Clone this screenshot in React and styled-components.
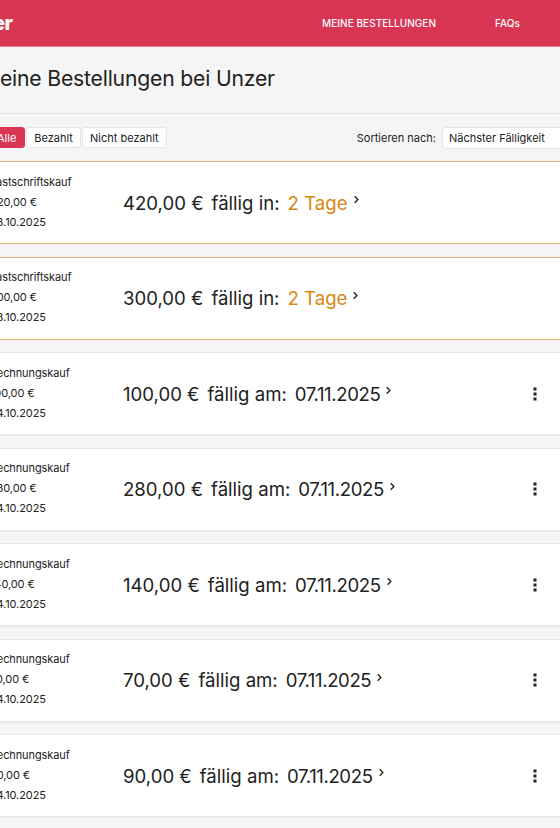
import React from "react";
import styled, { createGlobalStyle } from "styled-components";

const GlobalStyle = createGlobalStyle`
  html, body {
    margin: 0;
    padding: 0;
    background: #f5f5f5;
    overflow: hidden;
  }
  body {
    font-family: "Inter", "Noto Sans", sans-serif;
    color: #222;
  }
  * { box-sizing: border-box; }
`;

const orders = [
  { method: "Lastschriftskauf", total: "420,00 €", date: "28.10.2025", amount: "420,00 €", label: "fällig in:", due: "2 Tage", soon: true },
  { method: "Lastschriftskauf", total: "300,00 €", date: "28.10.2025", amount: "300,00 €", label: "fällig in:", due: "2 Tage", soon: true },
  { method: "Rechnungskauf", total: "100,00 €", date: "24.10.2025", amount: "100,00 €", label: "fällig am:", due: "07.11.2025" },
  { method: "Rechnungskauf", total: "280,00 €", date: "24.10.2025", amount: "280,00 €", label: "fällig am:", due: "07.11.2025" },
  { method: "Rechnungskauf", total: "140,00 €", date: "24.10.2025", amount: "140,00 €", label: "fällig am:", due: "07.11.2025" },
  { method: "Rechnungskauf", total: "70,00 €", date: "24.10.2025", amount: "70,00 €", label: "fällig am:", due: "07.11.2025" },
  { method: "Rechnungskauf", total: "90,00 €", date: "24.10.2025", amount: "90,00 €", label: "fällig am:", due: "07.11.2025" },
];

const Viewport = styled.div`
  width: 560px;
  height: 828px;
  overflow: hidden;
`;

const Page = styled.div`
  width: 600px;
  margin-left: -20px;
`;

const Header = styled.header`
  height: 47px;
  background: #d93654;
  border-bottom: 1px solid #e87b8f;
  display: flex;
  align-items: center;
`;

const Logo = styled.div`
  font-size: 20px;
  font-weight: 800;
  color: #fff;
  letter-spacing: -0.5px;
  margin-left: -24px;
  width: 300px;
`;

const Nav = styled.nav`
  display: flex;
  align-items: center;
  gap: 59px;
  margin-left: 66px;
`;

const NavLink = styled.a`
  color: #fff;
  font-size: 10px;
  font-weight: 500;
  letter-spacing: 0.05px;
  text-decoration: none;
`;

const TitleBar = styled.div`
  height: 67px;
  display: flex;
  align-items: center;
  padding-left: 1px;
  padding-bottom: 4px;
  border-bottom: 1px solid #e4e4e4;
`;

const Title = styled.h1`
  margin: 0;
  font-size: 21.2px;
  font-weight: 400;
  color: #222;
  letter-spacing: -0.2px;
`;

const Toolbar = styled.div`
  display: flex;
  align-items: center;
  justify-content: space-between;
  height: 47px;
  padding: 0 0 0 8px;
`;

const Tabs = styled.div`
  display: flex;
  gap: 1px;
`;

const Tab = styled.button`
  height: 21px;
  padding: 0 ${(p) => (p.active ? "8px" : "7px")};
  border: 1px solid ${(p) => (p.active ? "#d93654" : "#e6e6e6")};
  border-radius: 3px;
  background: ${(p) => (p.active ? "#d93654" : "#fff")};
  color: ${(p) => (p.active ? "#fff" : "#222")};
  font-family: inherit;
  font-size: 11px;
  cursor: pointer;
`;

const Sort = styled.div`
  display: flex;
  align-items: center;
  gap: 6px;
  font-size: 11px;
`;

const Select = styled.div`
  width: 138px;
  height: 22px;
  padding: 0 6px;
  background: #fff;
  border: 1px solid #e4e4e4;
  border-radius: 4px;
  display: flex;
  align-items: center;
  justify-content: space-between;
  font-size: 11px;
`;

const List = styled.div`
  display: flex;
  flex-direction: column;
  gap: 12.5px;
`;

const Card = styled.div`
  height: 83px;
  background: #fff;
  border: 1px solid ${(p) => (p.soon ? "#e8b26c" : "#e6e6e6")};
  box-shadow: ${(p) => (p.soon ? "none" : "0 1px 1px rgba(0, 0, 0, 0.04)")};
  display: flex;
  align-items: center;
  padding: 0 42px 0 9px;
`;

const Info = styled.div`
  width: 133px;
  display: flex;
  flex-direction: column;
  gap: 7px;
  font-size: 11px;
  line-height: 13px;
  letter-spacing: -0.1px;
  padding-bottom: 1px;
`;

const Main = styled.div`
  flex: 1;
  display: flex;
  align-items: center;
  font-size: 18.6px;
  color: #222;
`;

const Amount = styled.span`
  margin-right: 8px;
`;

const Label = styled.span`
  margin-right: 8px;
`;

const Due = styled.span`
  color: ${(p) => (p.soon ? "#d5870f" : "#222")};
  letter-spacing: ${(p) => (p.soon ? "0" : "-0.4px")};
`;

const Chevron = styled.svg`
  margin-left: 5px;
  margin-top: -6px;
`;

const Menu = styled.svg`
  flex: none;
`;

export default function App() {
  return (
    <Viewport>
      <GlobalStyle />
      <Page>
        <Header>
          <Logo>Unzer</Logo>
          <Nav>
            <NavLink>MEINE BESTELLUNGEN</NavLink>
            <NavLink>FAQs</NavLink>
          </Nav>
        </Header>
        <TitleBar>
          <Title>Meine Bestellungen bei Unzer</Title>
        </TitleBar>
        <Toolbar>
          <Tabs>
            <Tab active>Alle</Tab>
            <Tab>Bezahlt</Tab>
            <Tab>Nicht bezahlt</Tab>
          </Tabs>
          <Sort>
            Sortieren nach:
            <Select>
              Nächster Fälligkeit
              <svg width="9" height="9" viewBox="0 0 10 10">
                <path d="M2 3.5 L5 6.5 L8 3.5" fill="none" stroke="#444" strokeWidth="1.2" />
              </svg>
            </Select>
          </Sort>
        </Toolbar>
        <List>
          {orders.map((o, i) => (
            <Card key={i} soon={o.soon}>
              <Info>
                <span>{o.method}</span>
                <span>{o.total}</span>
                <span>{o.date}</span>
              </Info>
              <Main>
                <Amount>{o.amount}</Amount>
                <Label>{o.label}</Label>
                <Due soon={o.soon}>{o.due}</Due>
                <Chevron width="7" height="9" viewBox="0 0 7 10">
                  <path d="M1.5 1.5 L5 5 L1.5 8.5" fill="none" stroke="#222" strokeWidth="1.5" />
                </Chevron>
              </Main>
              {!o.soon && (
                <Menu width="4" height="14" viewBox="0 0 4 14">
                  <rect x="0.5" y="0.5" width="3" height="3" fill="#222" />
                  <rect x="0.5" y="5.5" width="3" height="3" fill="#222" />
                  <rect x="0.5" y="10.5" width="3" height="3" fill="#222" />
                </Menu>
              )}
            </Card>
          ))}
        </List>
      </Page>
    </Viewport>
  );
}
